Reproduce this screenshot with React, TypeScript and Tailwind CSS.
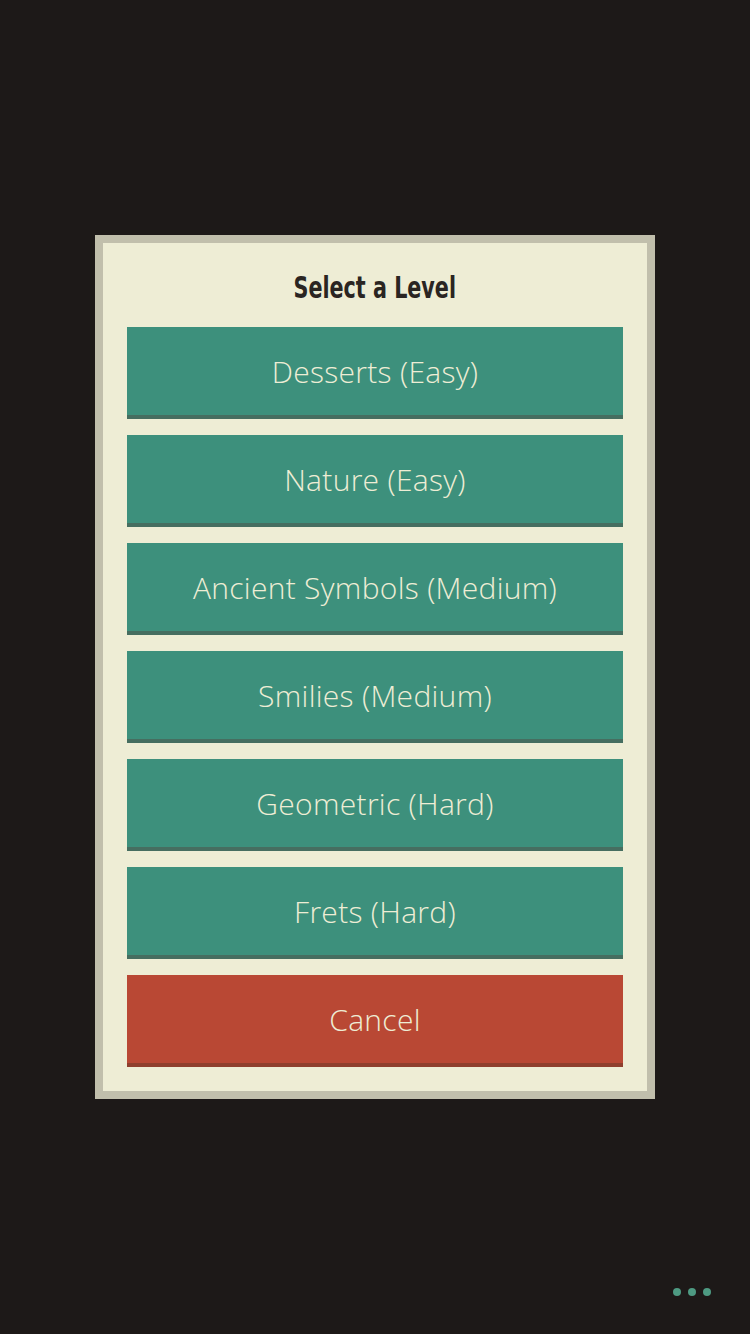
const LEVELS = [
  "Desserts (Easy)",
  "Nature (Easy)",
  "Ancient Symbols (Medium)",
  "Smilies (Medium)",
  "Geometric (Hard)",
  "Frets (Hard)",
];

function LevelButton({ label, tone }: { label: string; tone: "teal" | "red" }) {
  const color =
    tone === "teal"
      ? "bg-[#3d907c] border-[#466e60]"
      : "bg-[#b94834] border-[#8f3f2d]";
  return (
    <button
      type="button"
      className={`flex h-[92px] w-full items-center justify-center border-b-4 font-['Open_Sans','Lato',sans-serif] text-[30px] font-light tracking-[0.3px] text-[#eeedd5] ${color}`}
    >
      {label}
    </button>
  );
}

export default function App() {
  return (
    <div className="relative flex h-[1334px] w-[750px] flex-col items-center bg-[#1d1918]">
      <div className="mt-[235px] w-[560px] border-8 border-[#c1bfac] bg-[#eeedd5] px-6 pb-6">
        <h1 className="flex h-[84px] items-center justify-center pt-1 font-['DejaVu_Sans',sans-serif] text-[30px] font-bold text-[#2a2522]">
          <span className="inline-block scale-x-[0.69] whitespace-nowrap">Select a Level</span>
        </h1>
        <div className="flex flex-col gap-4">
          {LEVELS.map((level) => (
            <LevelButton key={level} label={level} tone="teal" />
          ))}
          <LevelButton label="Cancel" tone="red" />
        </div>
      </div>

      {/* more menu */}
      <div className="absolute bottom-[38px] right-[39px] flex gap-[7px]">
        <span className="size-2 rounded-full bg-[#4e9a82]" />
        <span className="size-2 rounded-full bg-[#4e9a82]" />
        <span className="size-2 rounded-full bg-[#4e9a82]" />
      </div>
    </div>
  );
}
